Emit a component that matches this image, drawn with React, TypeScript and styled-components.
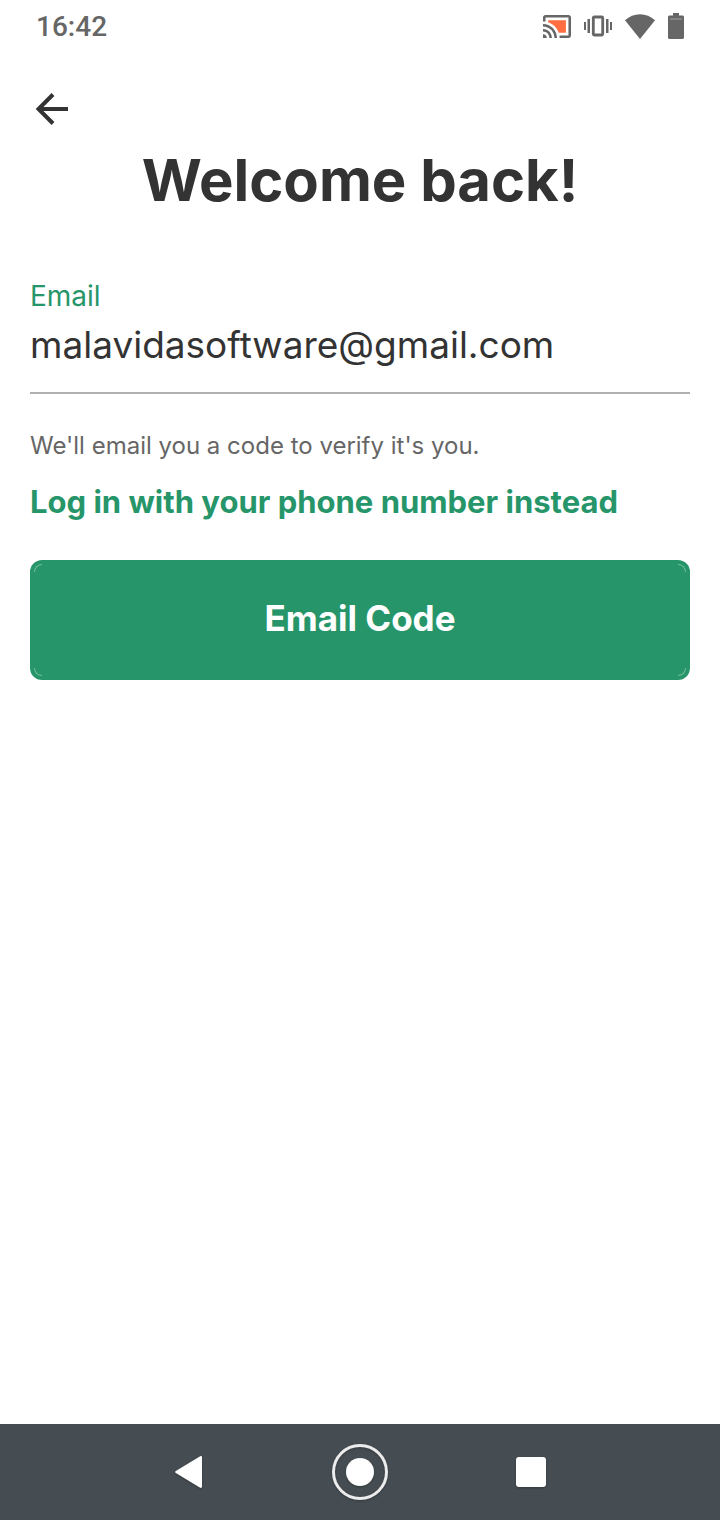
import React, { useState } from "react";
import styled, { createGlobalStyle } from "styled-components";

const green = "#26966a";
const ink = "#333333";
const grey = "#666666";

const GlobalStyle = createGlobalStyle`
  *, *::before, *::after { box-sizing: border-box; }
  body {
    margin: 0;
    background: #ffffff;
    color: ${ink};
    font-family: Inter, "Liberation Sans", sans-serif;
  }
`;

const Screen = styled.div`
  display: flex;
  flex-direction: column;
  min-height: 100vh;
`;

const StatusBar = styled.header`
  display: flex;
  align-items: center;
  justify-content: space-between;
  height: 52px;
  padding: 0 36px;
`;

const Clock = styled.time`
  padding-top: 2px;
  color: ${grey};
  font: 500 28px/32px Roboto, sans-serif;
`;

const StatusIcons = styled.div`
  display: flex;
  align-items: center;
  gap: 13px;
  color: ${grey};

  svg { display: block; fill: currentColor; }
`;

const Main = styled.main`
  display: flex;
  flex: 1;
  flex-direction: column;
  padding: 32px 30px;
`;

const BackButton = styled.button`
  align-self: flex-start;
  padding: 8px 4px;
  border: 0;
  background: none;
  color: ${ink};
  cursor: pointer;

  svg { display: block; }
`;

const Title = styled.h1`
  margin: 10px 0 64px;
  font-size: 58px;
  font-weight: 700;
  line-height: 72px;
  text-align: center;
`;

const FieldLabel = styled.label`
  color: ${green};
  font-size: 28px;
  line-height: 32px;
`;

const EmailInput = styled.input`
  width: 100%;
  height: 82px;
  padding: 0 0 16px;
  border: 0;
  border-bottom: 2px solid #b0b0b0;
  border-radius: 0;
  outline: 0;
  background: none;
  color: ${ink};
  font: inherit;
  font-size: 37px;
`;

const Hint = styled.p`
  margin: 36px 0 20px;
  color: ${grey};
  font-size: 24px;
  line-height: 32px;
`;

const PhoneLink = styled.a`
  align-self: flex-start;
  color: ${green};
  font-size: 31px;
  font-weight: 700;
  line-height: 40px;
  text-decoration: none;
`;

const SubmitButton = styled.button`
  position: relative;
  height: 120px;
  margin-top: 38px;
  padding: 0 0 4px;
  border: 0;
  border-radius: 12px;
  background: ${green};
  color: #ffffff;
  font: inherit;
  font-size: 35px;
  font-weight: 700;
  cursor: pointer;
`;

const Corner = styled.span<{ $y: "top" | "bottom"; $x: "left" | "right" }>`
  position: absolute;
  ${(p) => p.$y}: 4px;
  ${(p) => p.$x}: 4px;
  width: 8px;
  height: 8px;
  border: 0 solid #6dbb9b;
  border-${(p) => p.$y}-width: 1px;
  border-${(p) => p.$x}-width: 1px;
  border-${(p) => p.$y}-${(p) => p.$x}-radius: 8px;
`;

const NavBar = styled.nav`
  display: flex;
  align-items: center;
  justify-content: space-around;
  height: 96px;
  padding: 0 110px;
  background: #454d52;
`;

const NavButton = styled.button`
  padding: 0;
  border: 0;
  background: none;
  cursor: pointer;

  svg {
    display: block;
    fill: #ffffff;
    filter: drop-shadow(0 1px 1px rgba(0, 0, 0, 0.25));
  }
`;

const CastIcon = () => (
  <svg width="28" height="23" viewBox="1 3 22 18" aria-hidden="true">
    <path d="M1 18v3h3c0-1.66-1.34-3-3-3zm0-4v2c2.76 0 5 2.24 5 5h2c0-3.87-3.13-7-7-7zm0-4v2c4.97 0 9 4.03 9 9h2c0-6.08-4.93-11-11-11zm20-7H3c-1.1 0-2 .9-2 2v3h2V5h18v14h-7v2h7c1.1 0 2-.9 2-2V5c0-1.1-.9-2-2-2z" />
    <path fill="#ff6e40" d="M19 7H5v1.63c3.96 1.28 7.09 4.41 8.37 8.37H19z" />
  </svg>
);

const VibrateIcon = () => (
  <svg width="28" height="22" viewBox="0 0 28 22" aria-hidden="true">
    <path d="M0 7h2v8H0zM3.500 4h2.500v14H3.500zM22 4h2.500v14H22zM26 7h2v8h-2z" />
    <rect x="9.300" y="2" width="9.400" height="18" rx="1" fill="none" stroke="currentColor" strokeWidth="2.800" />
  </svg>
);

const WifiIcon = () => (
  <svg width="30" height="25" viewBox="0 0 30 25" aria-hidden="true">
    <path d="M15 25 30 6.300C25.800 2.400 20.600 .2 15 .2S4.200 2.400 0 6.300z" />
  </svg>
);

const BatteryIcon = () => (
  <svg width="16" height="26" viewBox="0 0 16 26" aria-hidden="true">
    <path d="M5 0h6v2.600h3.500c.8 0 1.500.7 1.500 1.500v20.400c0 .8-.7 1.500-1.500 1.500h-13C.7 26 0 25.300 0 24.500V4.100c0-.8.7-1.500 1.500-1.500H5z" />
    <path d="M2 6h12" stroke="#a3a3a3" strokeWidth="1" />
  </svg>
);

export default function App() {
  const [email, setEmail] = useState("malavidasoftware@gmail.com");

  return (
    <Screen>
      <GlobalStyle />
      <StatusBar>
        <Clock>16:42</Clock>
        <StatusIcons>
          <CastIcon />
          <VibrateIcon />
          <WifiIcon />
          <BatteryIcon />
        </StatusIcons>
      </StatusBar>

      <Main>
        <BackButton type="button" aria-label="Back">
          <svg width="36" height="34" viewBox="0 0 36 34" fill="none" stroke="currentColor" strokeWidth="4" aria-hidden="true">
            <path d="M34 17H5M19 2.500 4.500 17 19 31.500" />
          </svg>
        </BackButton>
        <Title>Welcome back!</Title>
        <FieldLabel htmlFor="email">Email</FieldLabel>
        <EmailInput id="email" type="email" value={email} onChange={(e) => setEmail(e.target.value)} />
        <Hint>We'll email you a code to verify it's you.</Hint>
        <PhoneLink href="#phone">Log in with your phone number instead</PhoneLink>
        <SubmitButton type="button">
          Email Code
          <Corner $y="top" $x="left" />
          <Corner $y="top" $x="right" />
          <Corner $y="bottom" $x="left" />
          <Corner $y="bottom" $x="right" />
        </SubmitButton>
      </Main>

      <NavBar aria-label="System">
        <NavButton type="button" aria-label="Back">
          <svg width="30" height="34" viewBox="0 0 30 34" aria-hidden="true">
            <path d="M1.800 16 26.200 1.200c.8-.4 1.800 0 1.800 1v29.600c0 1-1 1.400-1.800 1L1.800 18c-.9-.5-.9-1.500 0-2z" />
          </svg>
        </NavButton>
        <NavButton type="button" aria-label="Home">
          <svg width="56" height="56" viewBox="0 0 56 56" aria-hidden="true">
            <circle cx="28" cy="28" r="26.500" fill="none" stroke="#ececec" strokeWidth="3" />
            <circle cx="28" cy="28" r="14" />
          </svg>
        </NavButton>
        <NavButton type="button" aria-label="Recent apps">
          <svg width="30" height="30" viewBox="0 0 30 30" aria-hidden="true">
            <rect width="30" height="30" rx="3" />
          </svg>
        </NavButton>
      </NavBar>
    </Screen>
  );
}
